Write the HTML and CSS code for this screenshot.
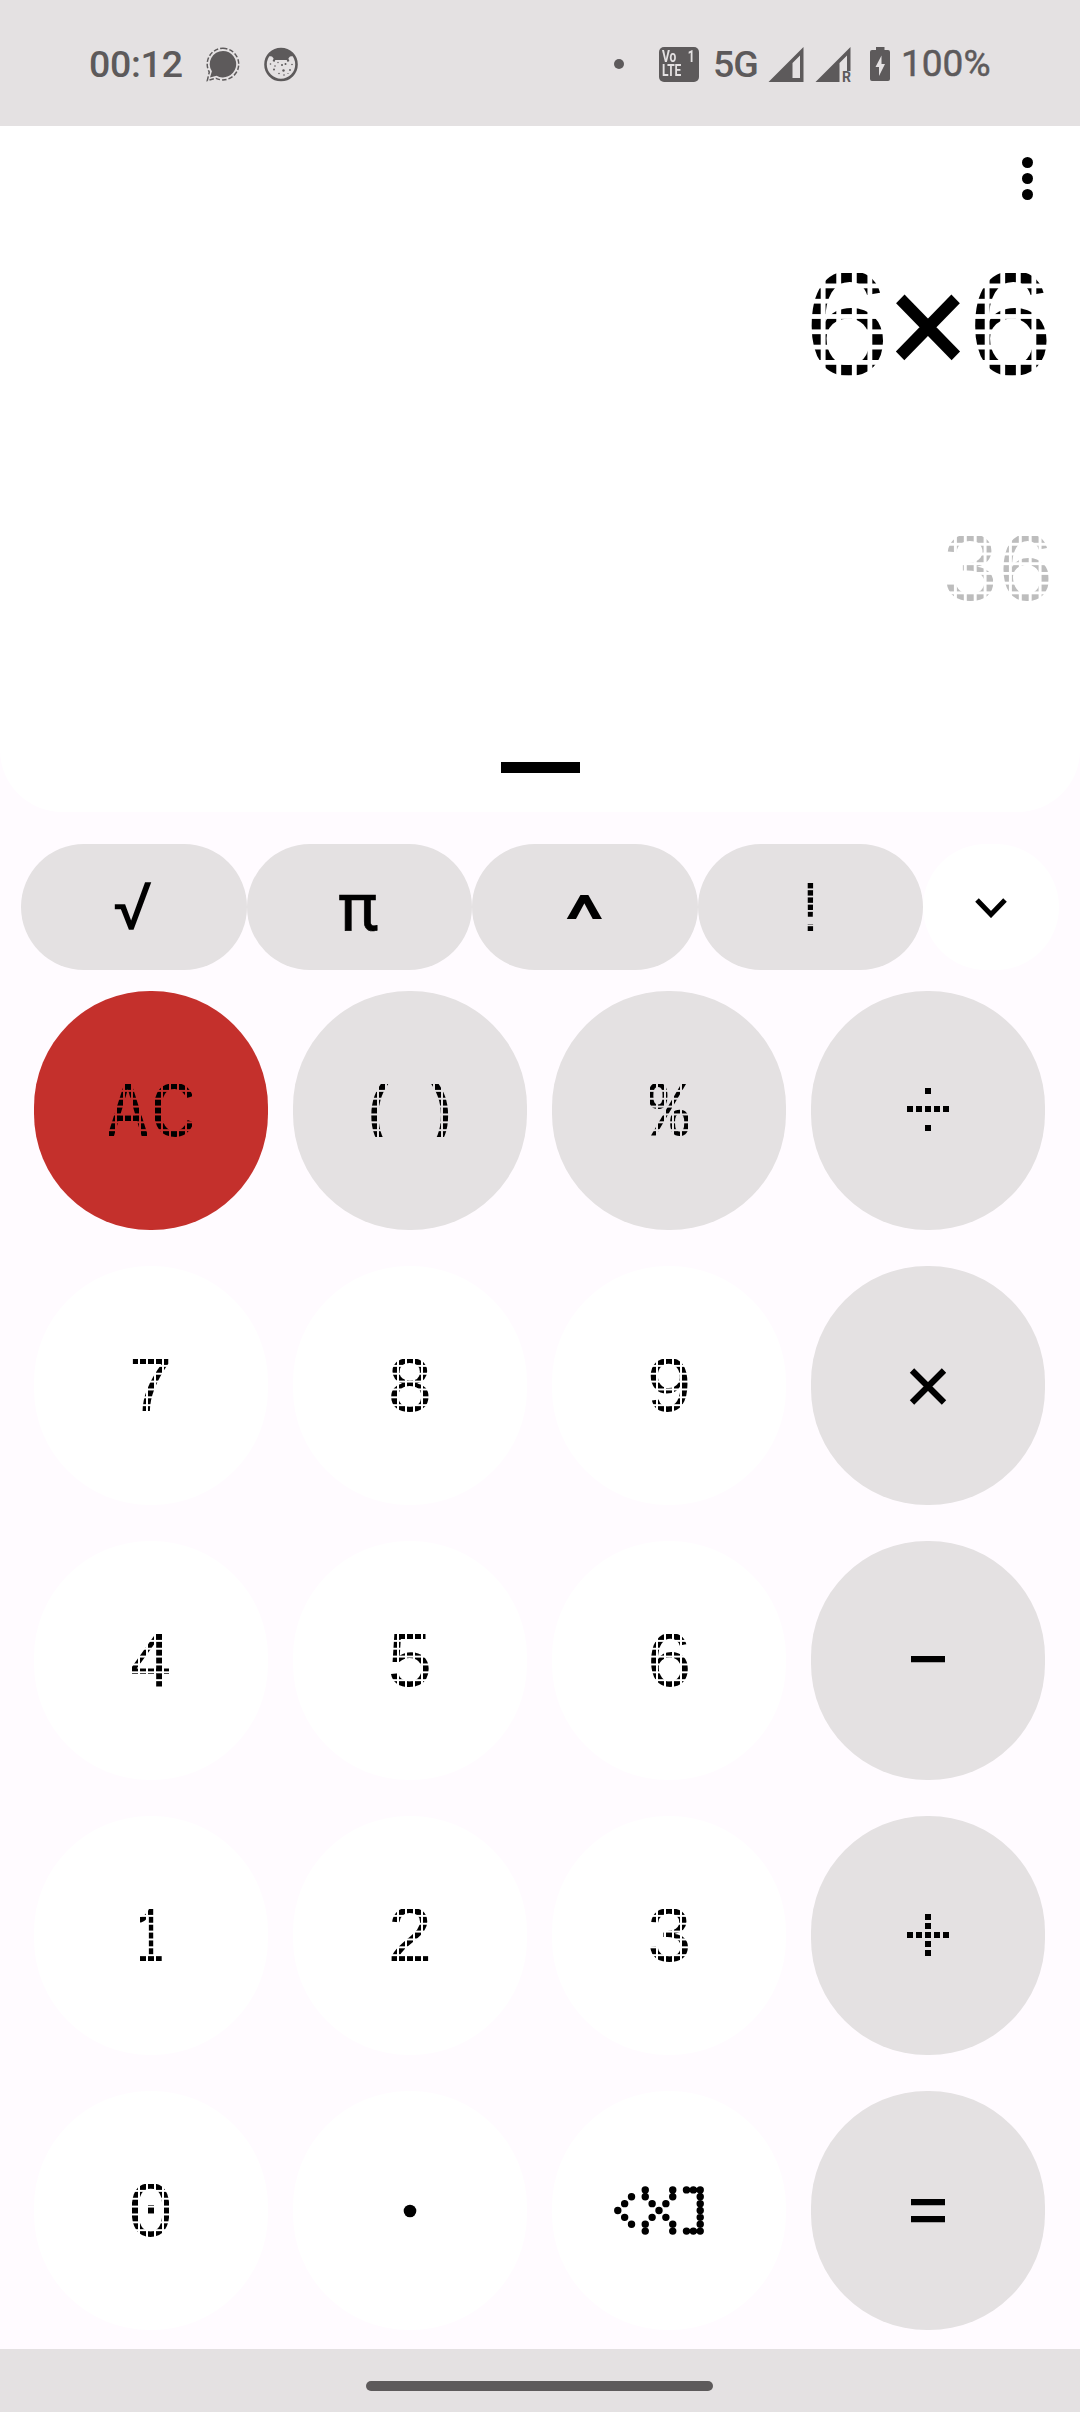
FILE: index.html
```html
<!DOCTYPE html>
<html lang="en">
<head>
<meta charset="utf-8">
<title>Calculator</title>
<link rel="stylesheet" href="styles.css">
</head>
<body>
<header class="status">
  <div class="status-left">
    <span class="clock">00:12</span>
    <svg class="ic-chat" width="34" height="35" viewBox="0 0 34 35"><path d="M17 4a13.200 13.200 0 1 1-6.500 24.700L4 30.500l1.900-6.200A13.200 13.200 0 0 1 17 4z" fill="currentColor"/><path d="M17 1.300a15.800 15.800 0 1 1-7 30L1.300 33.500l2-8.500A15.800 15.800 0 0 1 17 1.300z" fill="none" stroke="currentColor" stroke-width="1.500" stroke-dasharray="4.500 2"/></svg>
    <svg class="ic-face" width="34" height="35" viewBox="0 0 34 35"><circle cx="17" cy="17.500" r="15.500" fill="#e4e1e2" stroke="currentColor" stroke-width="2.600"/><path d="M5 9C9 3 13 1.500 17 1.500S26 3 29 9l-3 .5-3 3.500H11l-3-3.500z" fill="currentColor"/><path d="M11 11l-1.500 3.500M23 11l1.500 3.500" stroke="currentColor" stroke-width="2"/><g fill="currentColor"><circle cx="6.500" cy="17" r=".8"/><circle cx="11" cy="19" r=".8"/><circle cx="14" cy="15.500" r=".7"/><circle cx="18" cy="18" r="1"/><circle cx="21.500" cy="17" r="1"/><circle cx="10" cy="22.500" r="1"/><circle cx="19.500" cy="23.500" r="1.200"/><circle cx="15" cy="26.500" r=".8"/><circle cx="26" cy="23" r=".9"/><circle cx="20" cy="28" r=".8"/><circle cx="28" cy="17.500" r=".8"/><circle cx="24" cy="26.500" r=".6"/></g></svg>
  </div>
  <div class="status-right">
    <i class="more-dot"></i>
    <span class="volte"><span>Vo</span><span>1</span><span>LTE</span></span>
    <span class="net">5G</span>
    <svg class="ic-sig1" width="36" height="35" viewBox="0 0 36 35"><path fill-rule="evenodd" d="M35.500 0v35H.500zM32 8.500l-7.500 7.500v15H32z" fill="currentColor"/></svg>
    <span class="roam"><svg width="36" height="35" viewBox="0 0 36 35"><path d="M35.500 0v24H32V8.500l-7.500 7.500v19H.500z" fill="currentColor"/></svg><b>R</b></span>
    <svg class="ic-bat" width="20" height="34" viewBox="0 0 20 34"><path d="M6 0h8.500v3H18a2 2 0 0 1 2 2v27a2 2 0 0 1-2 2H2a2 2 0 0 1-2-2V5a2 2 0 0 1 2-2h4z" fill="currentColor"/><path d="M11.500 8.500L5.500 20H9v9l6-12h-3.500z" fill="#e4e1e2"/></svg>
    <span class="percent">100%</span>
  </div>
</header>

<main class="display">
  <div class="menu"><svg width="11" height="43" viewBox="0 0 11 43" aria-label="Menu"><circle cx="5.500" cy="5.500" r="5.500"/><circle cx="5.500" cy="21.500" r="5.500"/><circle cx="5.500" cy="37.500" r="5.500"/></svg></div>
  <div class="expression"><span class="dot"><i>6</i></span><span class="times">×</span><span class="dot"><i>6</i></span></div>
  <div class="result"><span class="dot"><i>3</i></span><span class="dot"><i>6</i></span></div>
  <div class="handle"></div>
</main>

<nav class="functions">
  <button class="pill root">√</button>
  <button class="pill pi">π</button>
  <button class="pill caret"><span>^</span></button>
  <button class="pill bang"><span class="dot"><i>!</i></span></button>
  <button class="pill toggle" aria-label="More"><svg width="32" height="20" viewBox="0 0 32 20"><path d="M2 2l14 14.500L30 2" fill="none" stroke="#000" stroke-width="5"/></svg></button>
</nav>

<section class="keys">
  <button class="key clear"><span class="dot narrow"><i>A</i></span><span class="dot"><i>C</i></span></button>
  <button class="key op paren"><span class="dot"><i>(</i></span><span class="dot"><i>)</i></span></button>
  <button class="key op"><span class="dot narrow"><i>%</i></span></button>
  <button class="key op" aria-label="Divide"><svg width="42" height="48" viewBox="-21 -24 42 48"><path d="M-21-5h6v6h-6zm9 0h6v6h-6zm9 0h6v6h-6zm9 0h6v6h-6zm9 0h6v6h-6zM-3-23h6v6h-6zM-3 14h6v6h-6z"/></svg></button>

  <button class="key"><span class="dot"><i>7</i></span></button>
  <button class="key"><span class="dot"><i>8</i></span></button>
  <button class="key"><span class="dot"><i>9</i></span></button>
  <button class="key op" aria-label="Multiply"><svg width="38" height="38" viewBox="-19 -19.500 38 38"><path d="M-16-16l32 32M16-16l-32 32" stroke="#000" stroke-width="6.200"/></svg></button>

  <button class="key"><span class="dot"><i>4</i></span></button>
  <button class="key"><span class="dot"><i>5</i></span></button>
  <button class="key"><span class="dot"><i>6</i></span></button>
  <button class="key op" aria-label="Minus"><svg width="34" height="9" viewBox="0 0 34 9"><path d="M0 0h34v6.200H0z"/></svg></button>

  <button class="key"><span class="dot one"><i>1</i></span></button>
  <button class="key"><span class="dot"><i>2</i></span></button>
  <button class="key"><span class="dot"><i>3</i></span></button>
  <button class="key op" aria-label="Plus"><svg width="42" height="48" viewBox="-21 -25 42 48"><path d="M-21-5h6v6h-6zm9 0h6v6h-6zm9 0h6v6h-6zm9 0h6v6h-6zm9 0h6v6h-6zM-3-23h6v6h-6zm0 9h6v6h-6zm0 18h6v6h-6zm0 9h6v6h-6z"/></svg></button>

  <button class="key"><span class="dot"><i>0</i></span></button>
  <button class="key" aria-label="Point"><svg width="14" height="14" viewBox="0 0 14 14"><circle cx="7" cy="7" r="6.300"/></svg></button>
  <button class="key back" aria-label="Backspace"><svg width="90" height="49" viewBox="-.55 -.55 13.100 7.100"><path d="M0 3h0M1 2h0M1 4h0M2 1h0M2 5h0M4 0h0M4 1h0M4 5h0M4 6h0M5 2h0M5 4h0M6 3h0M7 2h0M7 4h0M8 0h0M8 1h0M8 5h0M8 6h0M10 0h0M11 0h0M12 0h0M12 1h0M12 2h0M12 3h0M12 4h0M12 5h0M12 6h0M11 6h0M10 6h0" fill="none" stroke="#000" stroke-width="1.080" stroke-linecap="round"/></svg></button>
  <button class="key op" aria-label="Equals"><svg width="34" height="24" viewBox="0 0 34 24"><path d="M0 0h34v6.200H0zM0 17h34v6.200H0z"/></svg></button>
</section>

<footer class="navbar"><div class="gesture"></div></footer>
</body>
</html>
```
FILE: styles.css
```css
* { box-sizing: border-box; }

body {
  margin: 0;
  width: 1080px;
  height: 2412px;
  display: flex;
  flex-direction: column;
  background: #fffbff;
  color: #000;
  font-family: Roboto, "Noto Sans", sans-serif;
}

svg { display: block; flex: none; }

button {
  border: 0;
  padding: 0;
  margin: 0;
  color: inherit;
  font: inherit;
  background: none;
}

/* status bar */
.status {
  height: 126px;
  flex: none;
  display: flex;
  justify-content: space-between;
  align-items: center;
  padding: 2px 89px 0 89px;
  background: #e4e1e2;
  color: #5d5a5b;
  font-size: 37.500px;
  font-weight: 500;
  line-height: 40px;
}
.status-left, .status-right { display: flex; align-items: center; }
.clock { width: 117px; letter-spacing: -.3px; }
.ic-face { margin-left: 24px; }
.more-dot { width: 10px; height: 10px; border-radius: 50%; background: currentColor; margin-right: 35px; }
.volte {
  width: 40px;
  height: 35px;
  border-radius: 5px;
  background: currentColor;
  display: grid;
  grid-template-columns: 1fr auto;
  grid-auto-rows: 14.500px;
  padding: 3px 4px 0 3px;
  font-size: 15px;
  font-weight: 700;
  line-height: 15px;
  margin-right: 14px;
}
.volte span { color: #e4e1e2; transform: scale(.8, 1.050); transform-origin: 0 50%; }
.volte span:nth-child(2) { transform-origin: 100% 50%; }
.net { width: 55px; letter-spacing: -1px; }
.roam { position: relative; margin: 0 19px 0 11px; }
.roam b { position: absolute; right: 0; bottom: -1px; font-size: 14px; line-height: 11px; }
.percent { width: 88px; margin: 0 2px 0 11px; font-weight: 400; font-size: 37px; -webkit-text-stroke: .5px currentColor; }

/* dot-matrix characters: text seen through a grid of squares */
.dot {
  display: flex;
  justify-content: center;
  align-items: flex-start;
  width: .525em;
  height: .736em;
  font-family: "Liberation Mono", monospace;
  -webkit-mask: conic-gradient(at 70% 70%, transparent 75%, #000 0) 0 0 / .1113em .1093em;
  mask: conic-gradient(at 70% 70%, transparent 75%, #000 0) 0 0 / .1113em .1093em;
}
.dot i { flex: none; font-style: normal; font-size: 1.105em; line-height: .79em; }
.dot.narrow i { transform: scaleX(.85); }
.dot.one i { transform: translateX(-.02em) scaleX(.62); }

/* display */
.display {
  height: 686px;
  flex: none;
  display: flex;
  flex-direction: column;
  background: #fff;
  border-radius: 0 0 62px 62px;
}
.menu { display: flex; justify-content: flex-end; padding: 31px 47px 0 0; height: 147px; }
.expression {
  display: flex;
  justify-content: flex-end;
  height: 263px;
  padding-right: 33px;
  font-size: 140px;
}
.times { width: 90px; text-align: center; font-size: 146px; line-height: 105px; }
.result {
  display: flex;
  justify-content: flex-end;
  gap: 9px;
  height: 226px;
  padding-right: 31px;
  font-size: 89px;
  color: #bdbdbd;
}
.handle { width: 79px; height: 11px; background: #000; margin-left: 501px; }

/* function row */
.functions {
  display: flex;
  height: 126px;
  flex: none;
  margin: 32px 21px 21px;
}
.pill {
  flex: 0 0 225.500px;
  display: flex;
  align-items: center;
  justify-content: center;
  border-radius: 63px;
  background: #e4e1e2;
  font-size: 67px;
}
.pill.toggle { flex: 1; background: #fff; padding: 2px 0 0 0; }
.bang { font-size: 66px; }
.root, .pi { padding-right: 2px; }
.pi { -webkit-text-stroke: .7px #000; }
.caret { font-weight: 500; }
.caret span { transform: translateY(13px) scaleX(1.400); }

/* keypad */
.keys {
  display: grid;
  grid-template-columns: repeat(4, 234px);
  grid-auto-rows: 239px;
  gap: 36px 25.300px;
  padding-left: 33.500px;
  flex: 1;
  align-content: start;
}
.key {
  display: flex;
  align-items: center;
  justify-content: center;
  gap: 8px;
  border-radius: 116px;
  background: #fff;
  font-size: 72px;
}
.key.op { background: #e4e1e2; }
.key.clear { background: #c4302c; }
.paren { gap: 18px; }
.back { padding-right: 20px; }

/* navigation bar */
.navbar {
  height: 63px;
  flex: none;
  display: flex;
  justify-content: center;
  align-items: center;
  padding: 10px 1px 0 0;
  background: #e4e1e2;
}
.gesture { width: 347px; height: 10px; border-radius: 5px; background: #5d5a5b; }
```
